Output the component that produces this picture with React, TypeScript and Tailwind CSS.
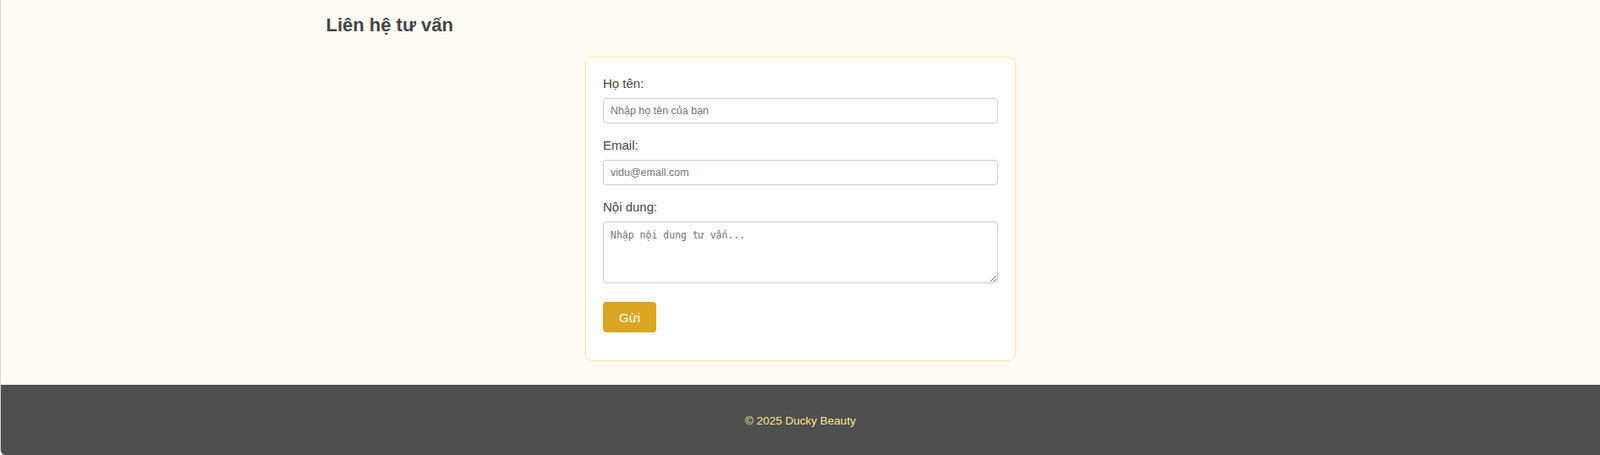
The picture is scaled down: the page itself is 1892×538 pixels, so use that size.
import React from "react";

const labelClass = "block text-[15px] leading-[22px] text-[#474747] mb-[6px]";
const fieldClass =
  "block w-full h-[30px] px-2 border border-[#cccccc] rounded-[4px] bg-white text-[12.5px] text-[#333] placeholder:text-[#757575] outline-none";

const ContactForm = () => {
  return (
    <form
      className="mx-auto mt-[25px] w-[509px] bg-white border border-[#fbe997] rounded-lg pt-5 px-5 pb-[33px]"
      onSubmit={(e) => e.preventDefault()}
    >
      <label htmlFor="name" className={labelClass}>
        Họ tên:
      </label>
      <input id="name" type="text" placeholder="Nhập họ tên của bạn" className={`${fieldClass} mb-[15px]`} />

      <label htmlFor="email" className={labelClass}>
        Email:
      </label>
      <input id="email" type="email" placeholder="vidu@email.com" className={`${fieldClass} mb-[15px]`} />

      <label htmlFor="message" className={labelClass}>
        Nội dung:
      </label>
      <textarea
        id="message"
        placeholder="Nhập nội dung tư vấn..."
        className="block w-full h-[73px] px-2 pt-[7px] border border-[#cccccc] rounded-[4px] bg-white font-['DejaVu_Sans_Mono',monospace] text-[11.5px] text-[#333] placeholder:text-[#757575] outline-none resize"
      />

      <button
        type="submit"
        className="mt-[22px] h-[36px] w-[63px] rounded-[4px] bg-[#daa520] text-white text-[15px] leading-none"
      >
        Gửi
      </button>
    </form>
  );
};

export default function App() {
  return (
    <div className="min-h-[538px] flex flex-col bg-[#fffcf5] border-l border-[#d6d6d6] rounded-bl-[6px] overflow-hidden font-['Liberation_Sans',Arial,sans-serif]">
      <main className="flex-1 pt-[17px] pb-[28px]">
        <section className="max-w-[1200px] mx-auto px-[39px]">
          <h2 className="text-[22px] leading-[25px] font-bold text-[#444]">Liên hệ tư vấn</h2>
        </section>
        <ContactForm />
      </main>

      {/* Footer */}
      <footer className="h-[83px] bg-[#4f4f4f] pt-[35px] text-center">
        <p className="text-[13.5px] leading-4 text-[#ffe88a]">© 2025 Ducky Beauty</p>
      </footer>
    </div>
  );
}
